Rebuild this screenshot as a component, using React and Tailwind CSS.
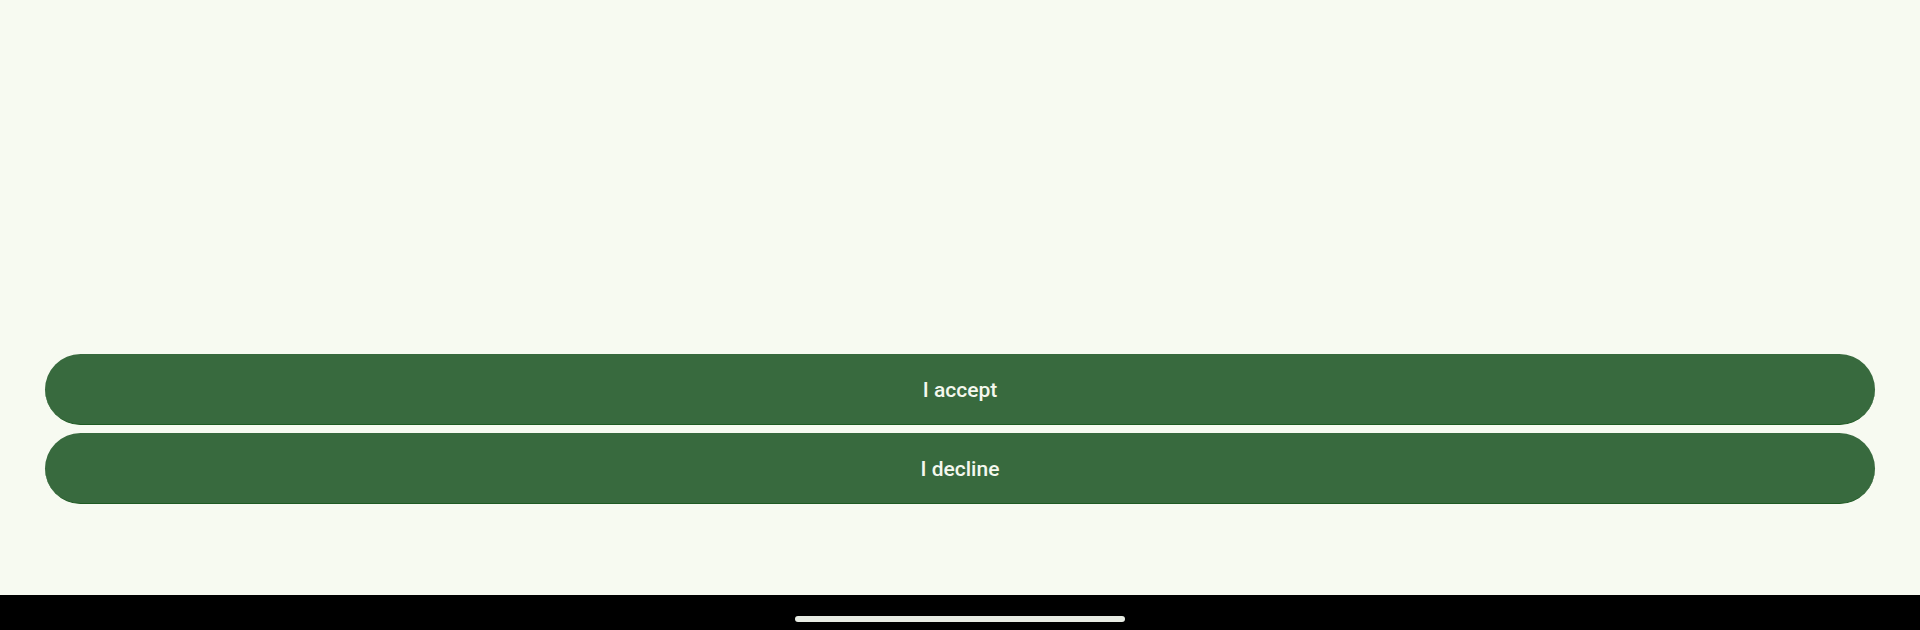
export default function App() {
  return (
    <div
      className="w-[1920px] h-[630px] bg-[#f7faf1] flex flex-col overflow-hidden"
      style={{ fontFamily: "Roboto, 'Noto Sans', sans-serif" }}
    >
      <div className="flex-1 flex flex-col justify-end px-[45px] pb-[91px] gap-[8px]">
        <button className="h-[71px] w-full rounded-full bg-[#386a3e] border-b border-[#1f5a24] pt-[4px] text-[21px] font-medium text-[#f4f8ee]">
          I accept
        </button>
        <button className="h-[71px] w-full rounded-full bg-[#386a3e] border-b border-[#1f5a24] pt-[4px] text-[21px] font-medium text-[#f4f8ee]">
          I decline
        </button>
      </div>
      <div className="h-[35px] bg-black flex items-start justify-center pt-[21px]">
        <div className="w-[330px] h-[6px] rounded-full bg-[#e8ece4]" />
      </div>
    </div>
  );
}
